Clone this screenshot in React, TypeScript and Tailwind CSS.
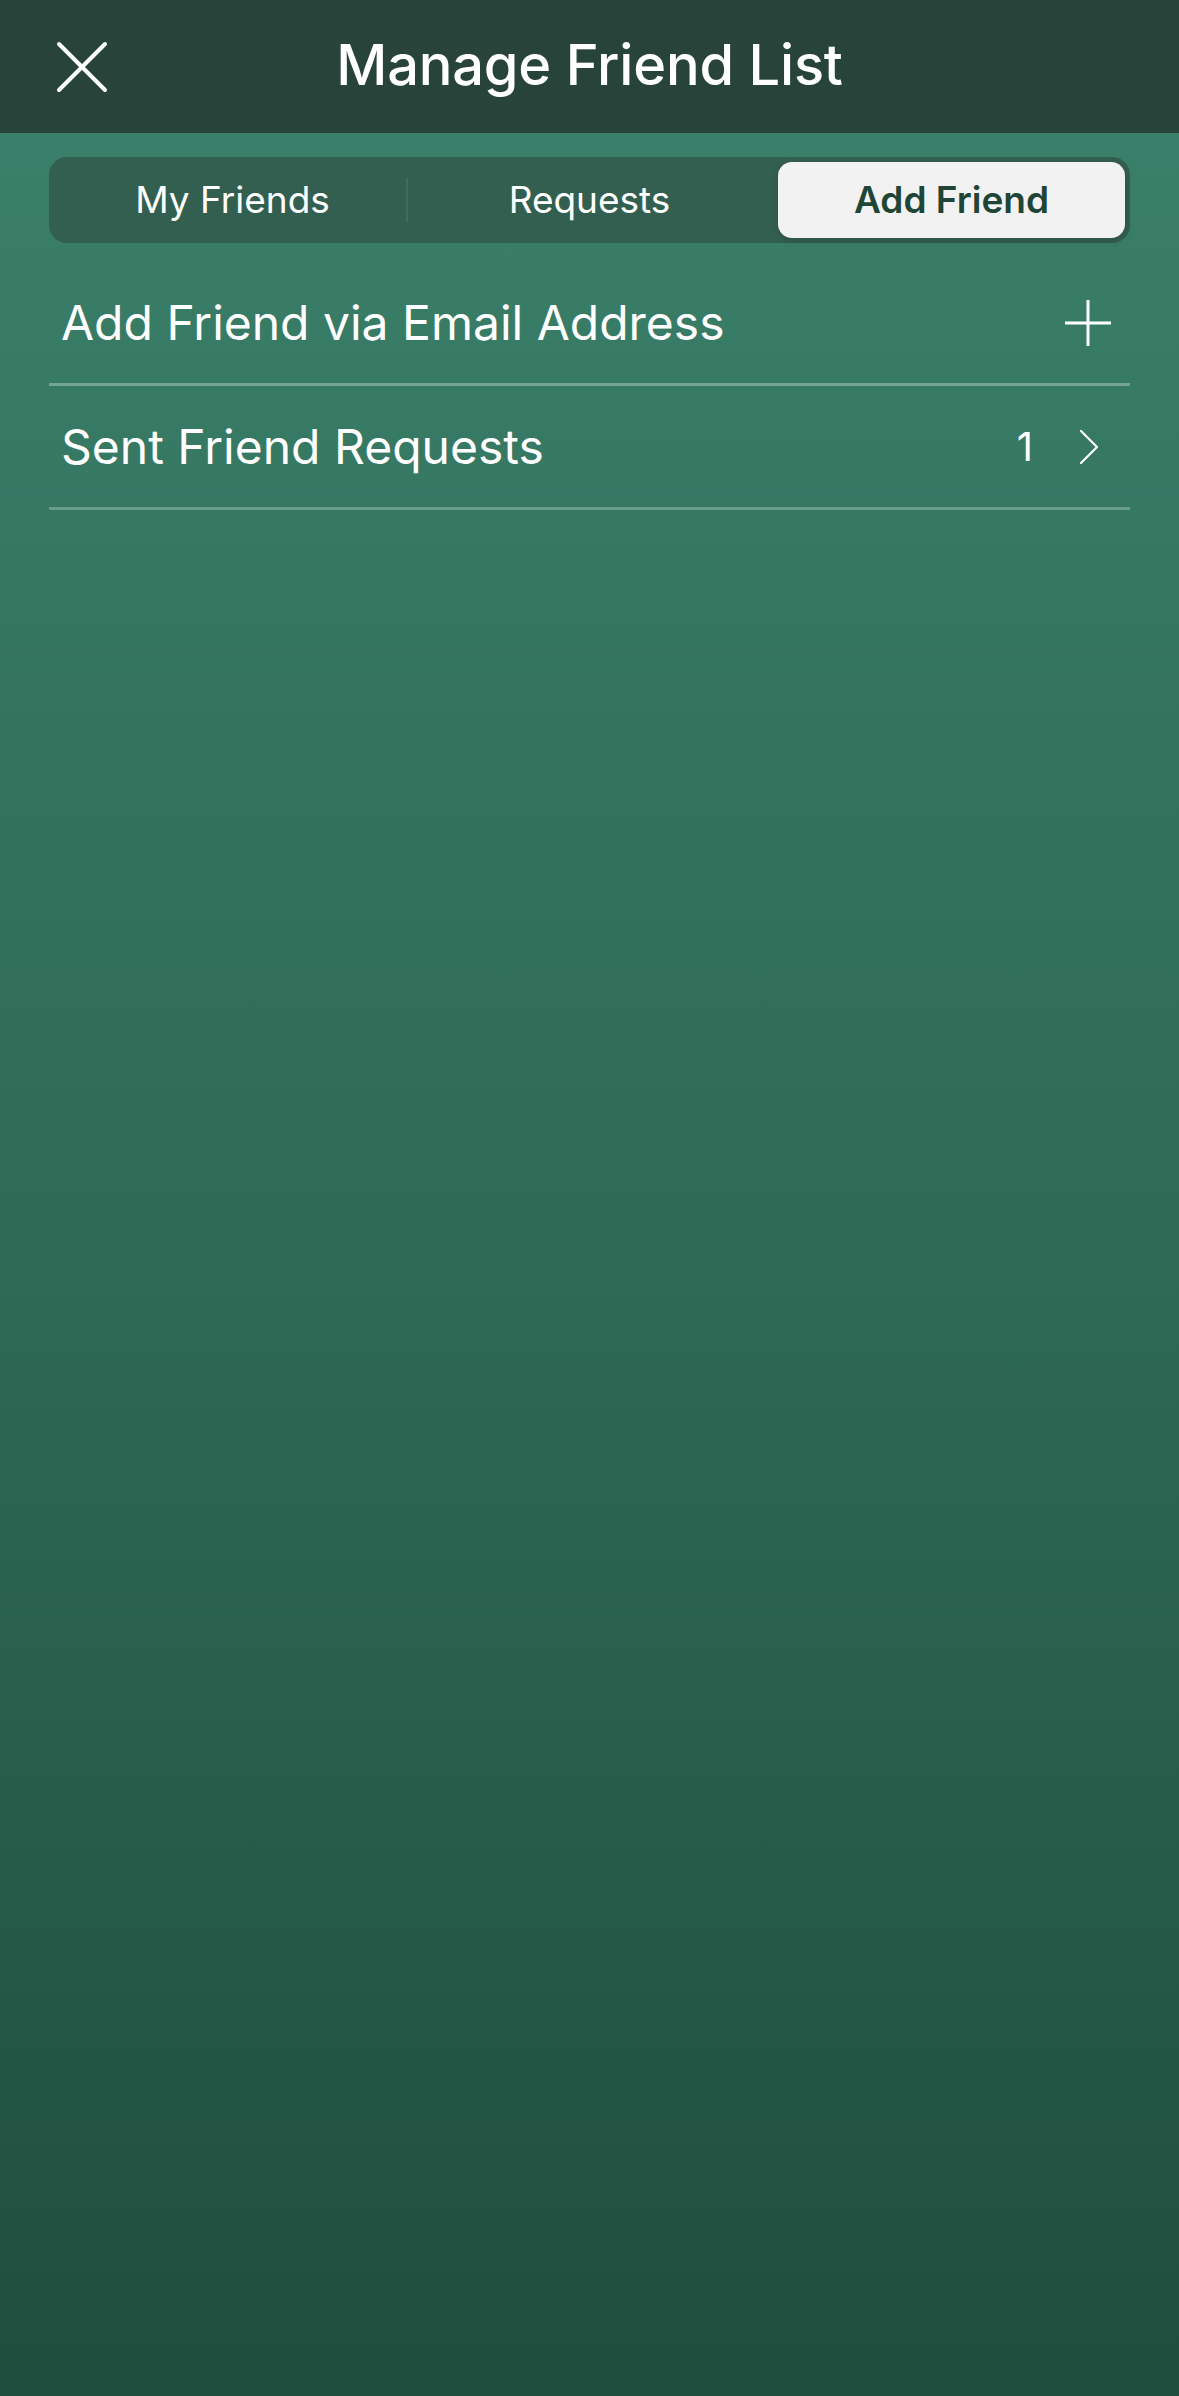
import { useState } from "react";

const tabs = ["My Friends", "Requests", "Add Friend"];

function CloseIcon() {
  return (
    <svg viewBox="0 0 52 52" className="h-[52px] w-[52px]" fill="none" stroke="white" strokeWidth="4" strokeLinecap="round">
      <path d="M3 3 L49 49 M49 3 L3 49" />
    </svg>
  );
}

function PlusIcon() {
  return (
    <svg viewBox="0 0 48 48" className="h-[48px] w-[48px]" fill="none" stroke="white" strokeWidth="3">
      <path d="M24 1 V47 M1 24 H47" />
    </svg>
  );
}

function Chevron() {
  return (
    <svg viewBox="0 0 20 36" className="h-[36px] w-[20px]" fill="none" stroke="white" strokeWidth="2.2" strokeLinecap="round" strokeLinejoin="round">
      <path d="M2 2 L18 18 L2 34" />
    </svg>
  );
}

export default function App() {
  const [active, setActive] = useState(2);

  return (
    <div className="flex min-h-[2396px] w-full flex-col font-['Inter','Noto_Sans',sans-serif] text-white">
      {/* header */}
      <header className="grid h-[133px] grid-cols-[1fr_auto_1fr] items-center bg-[#27433a] px-[56px]">
        <button className="flex items-center">
          <CloseIcon />
        </button>
        <h1 className="-mt-[4px] text-[56px] font-medium leading-none tracking-[-0.2px]">Manage Friend List</h1>
        <div />
      </header>

      <main className="flex-1 bg-gradient-to-b from-[#3a7f69] via-[#2e6a56] to-[#1f4d3e] px-[49px] pt-[24px]">
        {/* segmented control */}
        <div className="grid h-[86px] grid-cols-3 rounded-[18px] bg-[#335f51] p-[5px]">
          {tabs.map((t, i) => {
            const selected = i === active;
            const showDivider = i > 0 && i !== active && i - 1 !== active;
            return (
              <div key={t} className="relative flex">
                {showDivider && (
                  <span className="absolute -left-[5px] top-[16px] h-[44px] w-[2px] bg-[#3e6c5d]" />
                )}
                <button
                  onClick={() => setActive(i)}
                  className={
                    selected
                      ? "ml-[10px] flex-1 rounded-[14px] bg-[#f2f2f2] text-[37px] font-semibold text-[#1f4536] shadow-[0_3px_8px_rgba(0,0,0,0.15)]"
                      : "flex-1 text-[37px] font-normal text-white"
                  }
                >
                  {t}
                </button>
              </div>
            );
          })}
        </div>

        {/* rows */}
        <div className="mt-[19px] flex flex-col">
          <div className="flex h-[124px] items-center justify-between border-b-[3px] border-[#72a592] pl-[12px] pr-[18px]">
            <span className="text-[48px] leading-none">Add Friend via Email Address</span>
            <PlusIcon />
          </div>
          <div className="flex h-[124px] items-center justify-between border-b-[3px] border-[#6a9c8a] pl-[12px] pr-[31px]">
            <span className="text-[48px] leading-none">Sent Friend Requests</span>
            <div className="flex items-center gap-[46px]">
              <span className="text-[40px] leading-none">1</span>
              <Chevron />
            </div>
          </div>
        </div>
      </main>
    </div>
  );
}
